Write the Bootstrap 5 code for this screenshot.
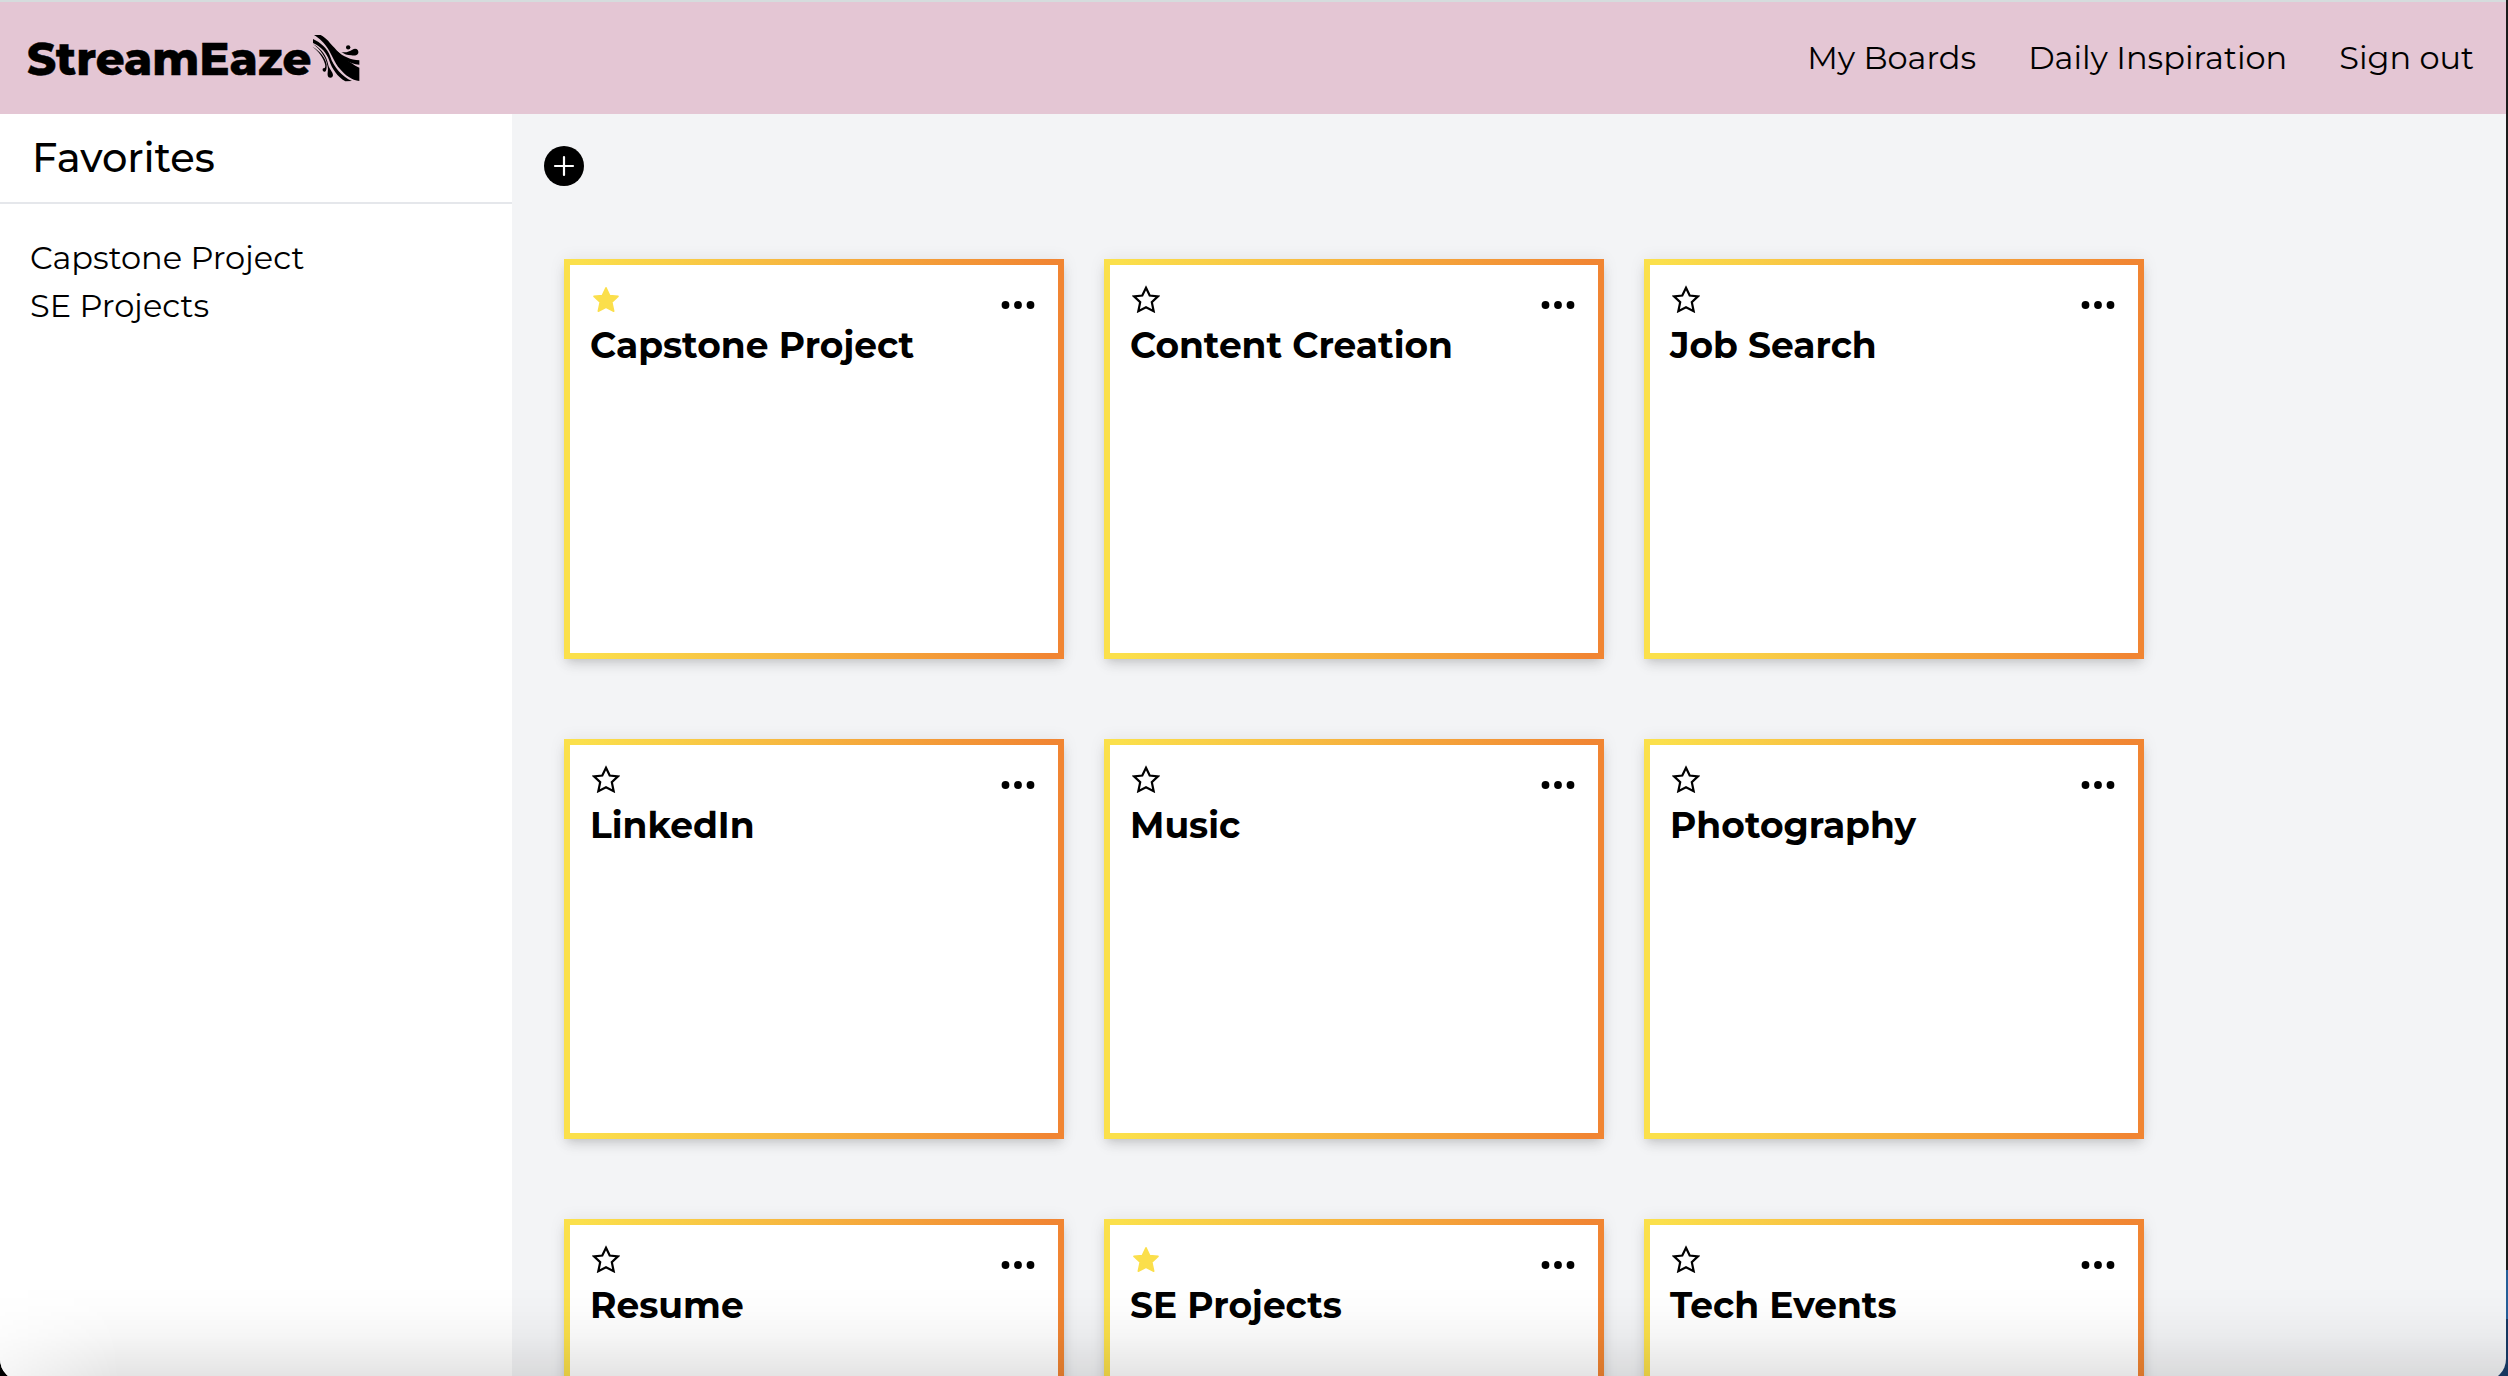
<!DOCTYPE html>
<html lang="en">
<head>
<meta charset="utf-8">
<meta name="viewport" content="width=device-width, initial-scale=1">
<title>StreamEaze</title>
<link href="https://cdn.jsdelivr.net/npm/bootstrap@5.3.0/dist/css/bootstrap.min.css" rel="stylesheet">
<style>
  html, body { height: 100%; }
  body {
    font-family: Montserrat, Inter, "Open Sans", sans-serif;
    color: #000;
    overflow: hidden;
    background: linear-gradient(#1b1b1b 0 1270px, #255d96 1270px 1319px, #16365f 1319px) right / 50% 100% no-repeat, #000;
  }
  .app-window {
    width: calc(100% - 2px);
    height: 1381px;
    background: #f3f4f6;
    border-radius: 0 0 22px 22px;
    overflow: hidden;
    position: relative;
  }
  .app-window::after {
    content: "";
    position: absolute;
    inset: 1286px 0 0 0;
    pointer-events: none;
    background: linear-gradient(rgba(0,0,0,0), rgba(0,0,0,.012) 25%, rgba(0,0,0,.035) 52%, rgba(0,0,0,.08) 78%, rgba(0,0,0,.115));
    -webkit-mask-image: linear-gradient(90deg, rgba(0,0,0,.35), #000 120px);
    mask-image: linear-gradient(90deg, rgba(0,0,0,.35), #000 120px);
  }

  .topbar { height: 114px; background: #e4c6d4; border-top: 2px solid #d5dcdd; padding: 0 32px 0 27px; }
  .brand-name { width: 285px; font-size: 45px; font-weight: 800; line-height: 1; -webkit-text-stroke: .4px #000; }
  .brand-mark { width: 48px; height: 48px; }
  .topbar .nav { gap: 52px; }
  .topbar .nav-link { padding: 0; color: #000; font-size: 32px; line-height: 48px; }

  .sidebar { width: 512px; background: #fff; }
  .sidebar-head { height: 90px; border-bottom: 2px solid #e5e7eb; padding-left: 32px; }
  .sidebar-head h2 { font-size: 40px; font-weight: 500; }
  .fav-list { padding: 30px 0 0 30px; }
  .fav-list a { color: #000; font-size: 32px; line-height: 48px; }

  .boards { padding: 32px; }
  .add-btn { width: 40px; height: 40px; }
  .board-grid { display: grid; grid-template-columns: repeat(3, 500px); grid-auto-rows: 400px; gap: 80px 40px; padding: 73px 0 0 20px; }
  .board {
    border: 6px solid transparent;
    background: linear-gradient(#fff, #fff) padding-box, linear-gradient(90deg, #fbe04b 3%, #f18532 97%) border-box;
    box-shadow: 0 8px 12px -2px rgba(0,0,0,.1), 0 4px 8px -4px rgba(0,0,0,.1), 0 0 16px rgba(0,0,0,.07);
    padding: 20px 19px 0 20px;
  }
  .star { width: 28px; height: 28px; margin-left: 2px; fill: none; stroke: #000; stroke-width: 2.2; }
  .star.on { fill: #fbdf4b; stroke: #fbdf4b; stroke-width: 1.6; stroke-linejoin: round; }
  .dots { width: 34px; height: 8px; margin: 16px 4px 0 0; }
  .board h3 { font-size: 36px; font-weight: 700; line-height: 48px; margin: 8px 0 0; }
</style>
<script src="https://cdn.jsdelivr.net/npm/bootstrap@5.3.0/dist/js/bootstrap.bundle.min.js"></script>
</head>
<body>
<svg class="d-none">
  <symbol id="i-star" viewBox="0 0 28 28"><path d="M14 2.800l3.700 7.700 8.300.9-6.200 5.700 1.900 9.100-7.700-3.900-7.700 3.900 1.900-9.100L2 11.400l8.300-.9z"/></symbol>
  <symbol id="i-dots" viewBox="0 0 34 8"><circle cx="4.500" cy="4" r="3.900"/><circle cx="17" cy="4" r="3.900"/><circle cx="29.500" cy="4" r="3.900"/></symbol>
</svg>

<div class="app-window d-flex flex-column">
  <header class="topbar d-flex align-items-center justify-content-between flex-shrink-0">
    <a href="#" class="d-flex align-items-center text-decoration-none text-black">
      <span class="brand-name text-nowrap">StreamEaze</span>
      <svg class="brand-mark" viewBox="36 42 144 144">
        <path d="M42 45H62C80 54 90 70 104 84C120 103 146 128 178 143V183C156 181 136 166 120 147C103 128 98 108 84 86C74 70 58 54 42 45Z"/>
        <path d="M39 57C62 68 82 84 91 110C100 139 126 170 156 183L136 184C112 170 96 146 88 122C80 99 64 80 39 69Z"/>
        <path d="M110 92C130 110 152 119 178 121V134C148 131 124 116 110 92Z"/>
        <path d="M124 96C138 99 148 94 157 89C168 82 177 90 175 99C172 108 161 107 154 106C142 106 132 102 124 96Z"/>
        <circle cx="144.500" cy="82" r="6.500"/>
        <path d="M39 72C64 86 80 106 85 136C88 148 99 156 99 166C98 176 84 176 83 166C82 156 86 150 82 136C78 110 60 88 39 72Z"/>
        <path d="M37 80C58 92 77 112 80 134C80 142 80 154 74 155C68 156 66 147 70 145C76 146 77 140 75 132C70 112 56 94 37 80Z"/>
      </svg>
    </a>
    <nav class="nav">
      <a href="#" class="nav-link">My Boards</a>
      <a href="#" class="nav-link">Daily Inspiration</a>
      <a href="#" class="nav-link">Sign out</a>
    </nav>
  </header>

  <div class="d-flex flex-grow-1 overflow-hidden">
    <aside class="sidebar flex-shrink-0">
      <div class="sidebar-head d-flex align-items-center"><h2 class="mb-0">Favorites</h2></div>
      <ul class="fav-list list-unstyled mb-0 d-flex flex-column">
        <li class="d-flex"><a href="#" class="text-decoration-none">Capstone Project</a></li>
        <li class="d-flex"><a href="#" class="text-decoration-none">SE Projects</a></li>
      </ul>
    </aside>

    <main class="boards flex-grow-1">
      <button type="button" class="add-btn btn p-0 border-0 d-block" aria-label="Add board">
        <svg class="d-block" width="40" height="40" viewBox="0 0 40 40"><circle cx="20" cy="20" r="20"/><path d="M20 11v18M11 20h18" stroke="#fff" stroke-width="2.200" stroke-linecap="round"/></svg>
      </button>
      <div class="board-grid">
        <article class="board"><div class="d-flex justify-content-between"><svg class="star on"><use href="#i-star"/></svg><svg class="dots"><use href="#i-dots"/></svg></div><h3>Capstone Project</h3></article>
        <article class="board"><div class="d-flex justify-content-between"><svg class="star"><use href="#i-star"/></svg><svg class="dots"><use href="#i-dots"/></svg></div><h3>Content Creation</h3></article>
        <article class="board"><div class="d-flex justify-content-between"><svg class="star"><use href="#i-star"/></svg><svg class="dots"><use href="#i-dots"/></svg></div><h3>Job Search</h3></article>
        <article class="board"><div class="d-flex justify-content-between"><svg class="star"><use href="#i-star"/></svg><svg class="dots"><use href="#i-dots"/></svg></div><h3>LinkedIn</h3></article>
        <article class="board"><div class="d-flex justify-content-between"><svg class="star"><use href="#i-star"/></svg><svg class="dots"><use href="#i-dots"/></svg></div><h3>Music</h3></article>
        <article class="board"><div class="d-flex justify-content-between"><svg class="star"><use href="#i-star"/></svg><svg class="dots"><use href="#i-dots"/></svg></div><h3>Photography</h3></article>
        <article class="board"><div class="d-flex justify-content-between"><svg class="star"><use href="#i-star"/></svg><svg class="dots"><use href="#i-dots"/></svg></div><h3>Resume</h3></article>
        <article class="board"><div class="d-flex justify-content-between"><svg class="star on"><use href="#i-star"/></svg><svg class="dots"><use href="#i-dots"/></svg></div><h3>SE Projects</h3></article>
        <article class="board"><div class="d-flex justify-content-between"><svg class="star"><use href="#i-star"/></svg><svg class="dots"><use href="#i-dots"/></svg></div><h3>Tech Events</h3></article>
      </div>
    </main>
  </div>
</div>
</body>
</html>
